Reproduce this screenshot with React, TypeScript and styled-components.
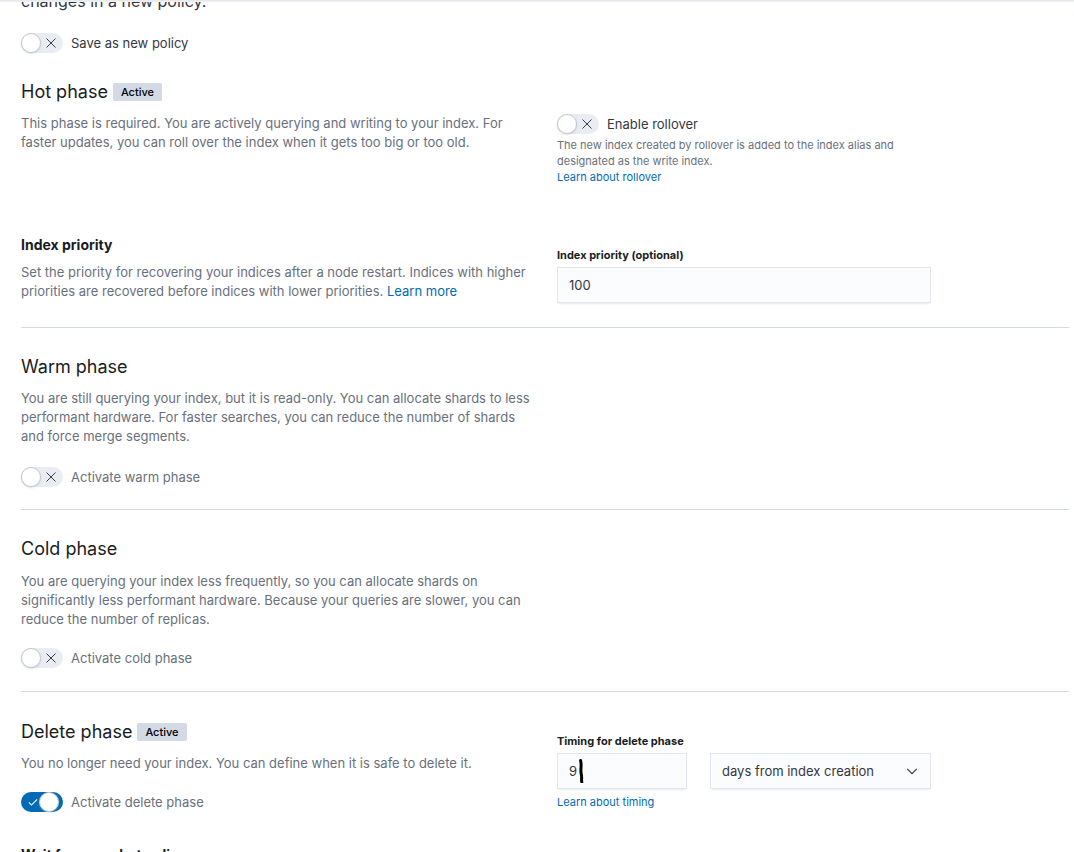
import React from "react";
import styled, { createGlobalStyle } from "styled-components";

const GlobalStyle = createGlobalStyle`
  html, body {
    margin: 0;
    padding: 0;
    background: #ffffff;
  }
  body {
    font-family: Inter, "Noto Sans", "Liberation Sans", sans-serif;
    color: #343741;
    -webkit-font-smoothing: antialiased;
  }
`;

const Switch = ({ on = false }: { on?: boolean }) => (
  <Track $on={on}>
    {on ? (
      <svg width="12" height="12" viewBox="0 0 16 16" style={{ marginLeft: 6 }}>
        <path d="M2.5 8.5l3.5 3.5 7.5-7.5" fill="none" stroke="#ffffff" strokeWidth="1.4" />
      </svg>
    ) : null}
    <Thumb />
    {!on ? (
      <svg width="12" height="12" viewBox="0 0 16 16" style={{ marginLeft: 4 }}>
        <path d="M2 2l12 12M14 2L2 14" fill="none" stroke="#343741" strokeWidth="1.3" />
      </svg>
    ) : null}
  </Track>
);

const ChevronDown = () => (
  <svg width="14" height="14" viewBox="0 0 16 16">
    <path d="M2.5 5.5l5.5 5.5 5.5-5.5" fill="none" stroke="#343741" strokeWidth="1.3" />
  </svg>
);

const Caret = () => (
  <svg width="7" height="24" viewBox="0 0 7 24">
    <path d="M2.6 1.5 C4 7 2 11 3.4 16 C4 19 3.2 21 3.8 23" fill="none" stroke="#000000" strokeWidth="3" strokeLinecap="round" />
  </svg>
);

const App = () => {
  return (
    <Page>
      <GlobalStyle />
      <HeaderShadow />
      <Intro>changes in a new policy.</Intro>
      <SwitchRow $mt={20}>
        <Switch />
        <SwitchLabel>Save as new policy</SwitchLabel>
      </SwitchRow>

      <DescribedRow $mt={27}>
        <div>
          <PhaseTitle>
            Hot phase <Badge>Active</Badge>
          </PhaseTitle>
          <Desc>
            This phase is required. You are actively querying and writing to your index. For
            faster updates, you can roll over the index when it gets too big or too old.
          </Desc>
        </div>
        <Fields $pt={34}>
          <SwitchRow>
            <Switch />
            <SwitchLabel>Enable rollover</SwitchLabel>
          </SwitchRow>
          <HelpText>
            The new index created by rollover is added to the index alias and
            <br />
            designated as the write index.
          </HelpText>
          <SmallLink href="#">Learn about rollover</SmallLink>
        </Fields>
      </DescribedRow>

      <DescribedRow $mt={50}>
        <div>
          <SubTitle>Index priority</SubTitle>
          <Desc $mt={8}>
            Set the priority for recovering your indices after a node restart. Indices with higher
            priorities are recovered before indices with lower priorities.{" "}
            <TextLink href="#">Learn more</TextLink>
          </Desc>
        </div>
        <Fields $pt={12}>
          <FieldLabel>Index priority (optional)</FieldLabel>
          <Input $w={374}>100</Input>
        </Fields>
      </DescribedRow>

      <Divider $mt={24} />

      <Phase>
        <PhaseTitle>Warm phase</PhaseTitle>
        <Desc>
          You are still querying your index, but it is read-only. You can allocate shards to less
          performant hardware. For faster searches, you can reduce the number of shards
          and force merge segments.
        </Desc>
        <SwitchRow $mt={21}>
          <Switch />
          <SwitchLabel $muted>Activate warm phase</SwitchLabel>
        </SwitchRow>
      </Phase>

      <Divider $mt={22} />

      <Phase>
        <PhaseTitle>Cold phase</PhaseTitle>
        <Desc $mt={11}>
          You are querying your index less frequently, so you can allocate shards on
          significantly less performant hardware. Because your queries are slower, you can
          reduce the number of replicas.
        </Desc>
        <SwitchRow $mt={19}>
          <Switch />
          <SwitchLabel $muted>Activate cold phase</SwitchLabel>
        </SwitchRow>
      </Phase>

      <Divider $mt={23} />

      <DescribedRow $mt={28}>
        <div>
          <PhaseTitle>
            Delete phase <Badge>Active</Badge>
          </PhaseTitle>
          <Desc>
            You no longer need your index. You can define when it is safe to delete it.
          </Desc>
          <SwitchRow $mt={19}>
            <Switch on />
            <SwitchLabel $muted>Activate delete phase</SwitchLabel>
          </SwitchRow>
        </div>
        <Fields $pt={13}>
          <FieldLabel>Timing for delete phase</FieldLabel>
          <InlineFields>
            <Input $w={130}>
              9
              <Caret />
            </Input>
            <Select>
              days from index creation
              <ChevronDown />
            </Select>
          </InlineFields>
          <SmallLink href="#" $mt={5}>
            Learn about timing
          </SmallLink>
        </Fields>
      </DescribedRow>

      <SubTitle $mt={33}>Wait for snapshot policy</SubTitle>
    </Page>
  );
};

const Page = styled.div`
  height: 852px;
  overflow: hidden;
  padding: 0 5px 0 21px;
  box-sizing: border-box;
`;

const HeaderShadow = styled.div`
  position: fixed;
  top: 0;
  left: 0;
  right: 0;
  height: 2px;
  background: linear-gradient(#e3e7ed, #f1f3f6);
`;

const Intro = styled.p`
  margin: -11px 0 0;
  font-size: 16px;
  line-height: 24px;
  color: #343741;
`;

const SwitchRow = styled.div<{ $mt?: number }>`
  display: flex;
  align-items: center;
  gap: 8px;
  height: 20px;
  margin-top: ${(p) => p.$mt ?? 0}px;
`;

const Track = styled.span<{ $on: boolean }>`
  display: inline-flex;
  align-items: center;
  width: 42px;
  height: 20px;
  border-radius: 10px;
  box-sizing: border-box;
  background: ${(p) => (p.$on ? "#006bb4" : "#e9edf3")};
  flex-shrink: 0;
`;

const Thumb = styled.span`
  width: 20px;
  height: 20px;
  border-radius: 50%;
  box-sizing: border-box;
  background: #ffffff;
  border: 1px solid #c2c8d2;
  box-shadow: 0 1px 2px rgba(152, 162, 179, 0.35);
`;

const SwitchLabel = styled.span<{ $muted?: boolean }>`
  font-size: 13px;
  line-height: 20px;
  color: ${(p) => (p.$muted ? "#69707d" : "#343741")};
`;

const DescribedRow = styled.div<{ $mt?: number }>`
  display: grid;
  grid-template-columns: 512px 1fr;
  column-gap: 24px;
  margin-top: ${(p) => p.$mt ?? 0}px;
`;

const Fields = styled.div<{ $pt: number }>`
  display: flex;
  flex-direction: column;
  align-items: flex-start;
  padding-top: ${(p) => p.$pt}px;
`;

const PhaseTitle = styled.h2`
  display: flex;
  align-items: center;
  gap: 5px;
  margin: 0;
  font-size: 18px;
  line-height: 24px;
  font-weight: 400;
  color: #1a1c21;
`;

const Badge = styled.span`
  display: inline-block;
  padding: 0 8px;
  height: 18px;
  line-height: 18px;
  border-radius: 2px;
  background: #d3dae6;
  font-size: 11px;
  font-weight: 500;
  color: #000000;
`;

const SubTitle = styled.h3<{ $mt?: number }>`
  margin: ${(p) => p.$mt ?? 0}px 0 0;
  font-size: 14px;
  line-height: 20px;
  font-weight: 700;
  color: #1a1c21;
`;

const Desc = styled.p<{ $mt?: number }>`
  margin: ${(p) => p.$mt ?? 10}px 0 0;
  font-size: 13px;
  line-height: 19px;
  color: #69707d;
`;

const TextLink = styled.a`
  color: #006bb4;
  text-decoration: none;
`;

const HelpText = styled.div`
  margin-top: 3px;
  font-size: 11px;
  line-height: 16px;
  color: #69707d;
`;

const SmallLink = styled.a<{ $mt?: number }>`
  margin-top: ${(p) => p.$mt ?? 0}px;
  font-size: 11px;
  line-height: 16px;
  color: #006bb4;
  text-decoration: none;
`;

const FieldLabel = styled.label`
  font-size: 11px;
  line-height: 16px;
  font-weight: 700;
  color: #1a1c21;
  margin-bottom: 4px;
`;

const fieldBox = `
  box-sizing: border-box;
  height: 36px;
  display: flex;
  align-items: center;
  padding: 0 12px;
  background: #fbfcfd;
  font-size: 13px;
  color: #343741;
  box-shadow: 0 1px 1px -1px rgba(152, 162, 179, 0.2), 0 3px 2px -2px rgba(152, 162, 179, 0.2),
    inset 0 0 0 1px rgba(15, 39, 118, 0.1);
`;

const Input = styled.div<{ $w: number }>`
  ${fieldBox}
  width: ${(p) => p.$w}px;
  gap: 1px;
`;

const Select = styled.div`
  ${fieldBox}
  width: 221px;
  justify-content: space-between;
  padding-right: 12px;
`;

const InlineFields = styled.div`
  display: flex;
  gap: 23px;
`;

const Divider = styled.hr<{ $mt: number }>`
  margin: ${(p) => p.$mt}px 0 0;
  border: none;
  height: 1px;
  background: #d3dae6;
`;

const Phase = styled.section`
  max-width: 512px;
  padding-top: 27px;
`;

export default App;
